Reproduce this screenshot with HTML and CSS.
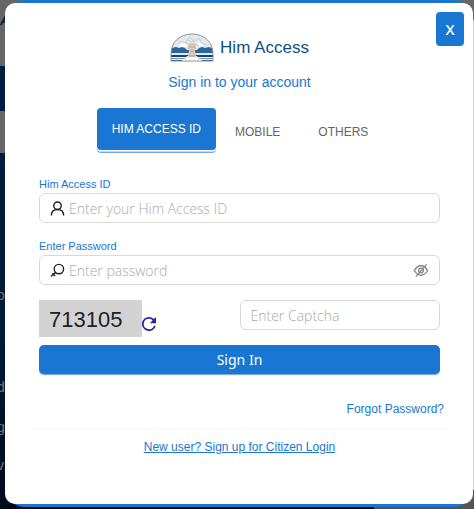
FILE: index.html
```
<!DOCTYPE html>
<html lang="en">
<head>
<meta charset="utf-8">
<title>Him Access - Sign in</title>
<meta name="viewport" content="width=device-width, initial-scale=1">
<link rel="stylesheet" href="styles.css">
</head>
<body>
<div class="backdrop" aria-hidden="true">
  <div class="band band-grey band-top"><b class="site-mark">A</b></div>
  <div class="band band-navy"></div>
  <div class="band band-grey"></div>
  <div class="band band-fade"><span>o</span><span>d</span><span>g</span><span>v</span></div>
</div>
<div class="frame">
  <main class="dialog">
    <button class="close" type="button" aria-label="Close">X</button>
    <header class="brand">
      <svg class="logo" viewBox="0 0 44 29" aria-hidden="true">
        <defs><clipPath id="dome"><path d="M1 28V21C1 9 10 1 22 1s21 8 21 20v7z"/></clipPath></defs>
        <g clip-path="url(#dome)">
          <path fill="#e6eaed" d="M0 0h44v29H0z"/>
          <path fill="none" stroke="#c3cdd3" d="M7 11l5-3 3 2 5-6 4 5 5-4 3 5 5 2M12 13l5-3 3 2M25 11l5 2 4-2M18 7l3 2 4-3"/>
          <path fill="#fff" d="M9 12l5-2 4 3-6 2zM28 9l6 3-5 2z"/>
          <path fill="#2b659c" d="M0 19l2-4 4-1 3 1 3-1 3 1 3 3h8l3-3 3-1 3 1 4-1 3 1 2 4v2H0z"/>
          <path fill="#2b659c" d="M0 17h44v3H0z"/>
          <path fill="#dce9f2" d="M0 20h44v2H0z"/>
          <path fill="#17427c" d="M0 22h44v2H0z"/>
          <path fill="#f1f5f8" d="M0 24h44v1H0z"/>
          <path fill="#7196b9" d="M0 25h44v1H0z"/>
          <path fill="#254a78" d="M0 27h44v2H0z"/>
          <path fill="#fff" d="M17 23h10l1 2 4 2v1H12v-1l4-2z"/>
          <path fill="#d9c6b4" d="M18 12l2-2h4l2 2v4l-1 2 1 6h-8l1-6-1-2z"/>
          <path fill="none" stroke="#bda999" d="M19 14h6M20 18h4M18 23h8"/>
        </g>
        <path fill="none" stroke="#8b9296" d="M1 28V21C1 9 10 1 22 1s21 8 21 20v7z"/>
      </svg>
      <h1 class="title">Him Access</h1>
    </header>
    <p class="subtitle">Sign in to your account</p>
    <div class="tabs" role="tablist">
      <button class="tab tab-active" type="button" role="tab" aria-selected="true">HIM ACCESS ID</button>
      <button class="tab" type="button" role="tab" aria-selected="false">MOBILE</button>
      <button class="tab" type="button" role="tab" aria-selected="false">OTHERS</button>
    </div>
    <form class="form">
      <label class="label" for="user">Him Access ID</label>
      <div class="field">
        <svg class="icon" viewBox="0 0 16 16" aria-hidden="true"><circle cx="8" cy="5" r="4"/><path d="M1.500 15.500c0-4 2.500-6.500 6.500-6.500s6.500 2.500 6.500 6.500"/></svg>
        <input class="input" id="user" type="text" placeholder="Enter your Him Access ID">
      </div>
      <label class="label" for="password">Enter Password</label>
      <div class="field">
        <svg class="icon" viewBox="0 0 16 16" aria-hidden="true"><circle cx="9.500" cy="6.500" r="5"/><path d="M6 10L1 14.500M2.500 11l3 3"/></svg>
        <input class="input" id="password" type="password" placeholder="Enter password">
        <button class="reveal" type="button" aria-label="Show password">
          <svg class="icon" viewBox="0 0 16 16" aria-hidden="true"><path d="M1 8c2-3.500 4.300-5 7-5s5 1.500 7 5c-2 3.500-4.300 5-7 5S3 11.500 1 8z"/><circle cx="8" cy="8" r="2.500"/><path d="M2.500 14.500L14 1.500"/></svg>
        </button>
      </div>
      <div class="captcha">
        <span class="code">713105</span>
        <button class="refresh" type="button" aria-label="Refresh captcha">
          <svg viewBox="4 4 16 16" aria-hidden="true"><path d="M17.650 6.350A7.960 7.960 0 0 0 12 4a8 8 0 1 0 7.730 10h-2.080A6 6 0 1 1 12 6c1.660 0 3.140.69 4.220 1.780L13 11h7V4z"/></svg>
        </button>
        <div class="field captcha-field"><input class="input" id="captcha" type="text" placeholder="Enter Captcha" aria-label="Enter Captcha"></div>
      </div>
      <button class="submit" type="button">Sign In</button>
    </form>
    <a class="forgot" href="#">Forgot Password?</a>
    <footer class="footer"><a class="signup" href="#">New user? Sign up for Citizen Login</a></footer>
  </main>
</div>
</body>
</html>
```
FILE: styles.css
```
* { box-sizing: border-box; }
html { height: 100%; }
body {
  min-height: 100%;
  margin: 0;
  padding: 0 1px 2px 5px;
  display: flex;
  position: relative;
  overflow: hidden;
  background: linear-gradient(#666 0 20px, #d4d4d4 20px 490px, #555 490px);
  font-family: "Liberation Sans", Arial, sans-serif;
}
button, input { font: inherit; }
button { border: 0; padding: 0; cursor: pointer; }

.backdrop {
  position: absolute;
  inset: 0 100px 0 0;
  display: flex;
  flex-direction: column;
  color: #777;
  font-size: 14px;
}
.band { flex: none; }
.band-top { height: 66px; }
.band-grey { background: #666; }
.band-navy + .band-grey { min-height: 42px; }
.band-navy { height: 45px; background: #001c40; }
.band-fade {
  flex: 1;
  background: linear-gradient(#001c40, #001a38 50%, #000a1d);
  display: flex;
  flex-direction: column;
  align-items: flex-start;
  padding-top: 132px;
  line-height: 20px;
}
.band-fade span { margin-left: -3px; }
.band-fade span:nth-child(2) { margin-top: 72px; }
.band-fade span:nth-child(3) { margin-top: 20px; }
.band-fade span:nth-child(4) { margin-top: 18px; }
.site-mark { display: block; padding-top: 12px; color: #001c40; font-style: italic; font-size: 14px; }

.frame {
  position: relative;
  flex: 1;
  display: flex;
  padding: 3px 0;
  border-radius: 20px;
  background: #1976d2;
}
.dialog {
  position: relative;
  flex: 1;
  display: flex;
  flex-direction: column;
  padding: 30px 33px 48px 34px;
  border-radius: 10px;
  background: #fff;
}
.close {
  position: absolute;
  top: 9px;
  right: 9px;
  width: 28px;
  height: 34px;
  border-radius: 4px;
  background: #1976d2;
  color: #fff;
  font-family: "Noto Sans", sans-serif;
  font-size: 15px;
  font-weight: 500;
}
.brand { display: flex; justify-content: center; align-items: center; gap: 6px; height: 29px; }
.logo { width: 44px; height: 29px; }
.title { margin: 0; color: #0d4f85; font-size: 17px; font-weight: 400; line-height: 24px; }
.subtitle { margin: 8px 0 0; color: #1976d2; font-size: 14px; line-height: 24px; text-align: center; }

.tabs { display: flex; align-self: center; margin: 14px 0 0 5px; height: 45px; }
.tab {
  padding: 3px 19px 0;
  background: transparent;
  color: #666;
  font-size: 12px;
}
.tab-active {
  padding: 0 15px;
  height: 42px;
  border-radius: 4px;
  background: #1976d2;
  box-shadow: 0 1px #fff, 0 2px #c5dcf4, 0 3px #76abe2;
  color: #fff;
}

.form { display: flex; flex-direction: column; margin-top: 23px; }
.label { padding-bottom: 1px; color: #1976d2; font-size: 11px; line-height: 16px; }
.field {
  display: flex;
  align-items: center;
  gap: 4px;
  height: 30px;
  margin-bottom: 15px;
  padding: 0 10px;
  border: 1px solid #d9d9d9;
  border-radius: 6px;
  background: #fff;
}
.icon { flex: none; width: 15px; height: 15px; fill: none; stroke: #222; stroke-width: 1.500; }
.input {
  flex: 1;
  min-width: 0;
  padding: 0;
  border: 0;
  outline: 0;
  background: transparent;
  color: #222;
  font-family: "Open Sans", sans-serif;
  font-size: 14px;
  font-weight: 300;
}
.input::placeholder { color: #aaa; opacity: 1; }
.reveal { display: flex; background: transparent; }
.reveal .icon { width: 16px; height: 15px; stroke: #888; }

.captcha { display: flex; align-items: flex-start; height: 45px; }
.code {
  flex: none;
  width: 103px;
  height: 37px;
  padding-left: 10px;
  background: #d3d3d3;
  color: #222;
  font-size: 22px;
  line-height: 40px;
}
.refresh { width: 14px; height: 14px; margin: 17px auto 0 0; background: transparent; }
.refresh svg { display: block; fill: #30209c; }
.captcha-field { width: 50%; margin: 0; }
.submit {
  height: 29px;
  border-radius: 5px;
  background: #1976d2;
  box-shadow: 0 1px #76abe2, 0 2px #e6f4ff;
  color: #fff;
  font-family: "Noto Sans", sans-serif;
  font-size: 14px;
}
.forgot {
  align-self: flex-end;
  margin: 27px -4px 0 0;
  color: #1976d2;
  font-size: 12px;
  line-height: 16px;
  text-decoration: none;
}
.footer {
  margin: 11px -8px 0;
  padding-top: 8px;
  border-top: 1px solid #f3f3f3;
  text-align: center;
}
.signup { color: #1976d2; font-size: 12px; line-height: 16px; }
```
